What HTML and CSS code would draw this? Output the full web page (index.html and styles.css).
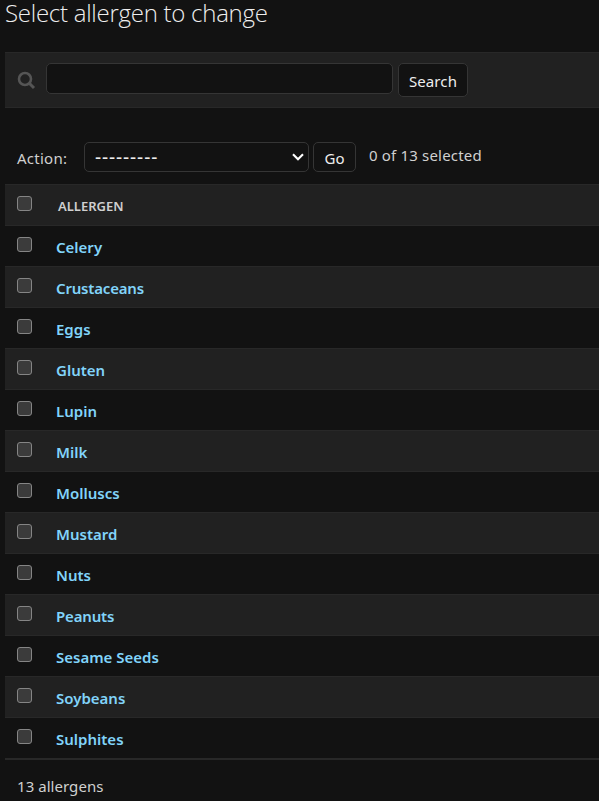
FILE: index.html
```html
<!DOCTYPE html>
<html lang="en">
<head>
<meta charset="utf-8">
<title>Select allergen to change</title>
<link rel="stylesheet" href="styles.css">
</head>
<body>
<main class="content">
  <h1 class="title">Select allergen to change</h1>
  <form class="toolbar">
    <svg class="search-icon" width="19" height="19" viewBox="0 0 19 19" fill="none" stroke="#555" aria-hidden="true"><circle cx="8" cy="8" r="6" stroke-width="2.6"/><path d="M12.3 12.3 17 17" stroke-width="3"/></svg>
    <input class="search-input" type="text" aria-label="Search">
    <button class="button search-button" type="button">Search</button>
  </form>
  <div class="actions">
    <span class="action-label">Action:</span>
    <div class="select"><span class="dashes">---------</span><svg width="12" height="8" viewBox="0 0 12 8" fill="none" stroke="#fff" stroke-width="2.1" aria-hidden="true"><path d="M1 1.2 6 6.2 11 1.2"/></svg></div>
    <button class="button go-button" type="button">Go</button>
    <span class="counter">0 of 13 selected</span>
  </div>
  <div class="results">
    <div class="row head"><span class="check"></span><span class="heading">ALLERGEN</span></div>
    <div class="row"><span class="check"></span><a class="name">Celery</a></div>
    <div class="row"><span class="check"></span><a class="name tight">Crustaceans</a></div>
    <div class="row"><span class="check"></span><a class="name">Eggs</a></div>
    <div class="row"><span class="check"></span><a class="name">Gluten</a></div>
    <div class="row"><span class="check"></span><a class="name">Lupin</a></div>
    <div class="row"><span class="check"></span><a class="name">Milk</a></div>
    <div class="row"><span class="check"></span><a class="name">Molluscs</a></div>
    <div class="row"><span class="check"></span><a class="name">Mustard</a></div>
    <div class="row"><span class="check"></span><a class="name">Nuts</a></div>
    <div class="row"><span class="check"></span><a class="name tight">Peanuts</a></div>
    <div class="row"><span class="check"></span><a class="name">Sesame Seeds</a></div>
    <div class="row"><span class="check"></span><a class="name">Soybeans</a></div>
    <div class="row"><span class="check"></span><a class="name">Sulphites</a></div>
  </div>
  <p class="paginator">13 allergens</p>
</main>
</body>
</html>
```
FILE: styles.css
```css
* { box-sizing: border-box; }
body {
  margin: 0;
  height: 801px;
  overflow: hidden;
  background: #121212;
  color: #d0d0d0;
  font-family: "Noto Sans", "Open Sans", sans-serif;
  font-size: 15px;
  line-height: 20px;
}
.content { padding-left: 5px; }
.title {
  margin: 0;
  height: 52px;
  color: #eee;
  font-family: "Open Sans", "Noto Sans", sans-serif;
  font-size: 24px;
  font-weight: 300;
  line-height: 25px;
  letter-spacing: -0.26px;
}
.toolbar {
  display: flex;
  align-items: flex-start;
  height: 56px;
  margin: 0;
  padding: 10px 0 0 12px;
  background: #212121;
  border-top: 1px solid #282828;
  border-bottom: 1px solid #282828;
}
.search-icon { flex: none; margin: 8px 10px 0 0; }
.search-input {
  width: 347px;
  height: 31px;
  padding: 0 6px;
  background: #121212;
  border: 1px solid #353535;
  border-radius: 5px;
  color: #eee;
}
.button {
  padding: 2px 0 0;
  background: #121212;
  border: 1px solid #353535;
  border-radius: 5px;
  color: #eee;
  font: inherit;
}
.search-button { width: 70px; height: 34px; margin-left: 5px; letter-spacing: 0.1px; }
.actions {
  display: flex;
  align-items: flex-start;
  height: 76px;
  padding: 34px 0 0 12px;
}
.action-label { width: 67px; padding-top: 6px; letter-spacing: 0.25px; }
.select {
  display: flex;
  align-items: center;
  justify-content: space-between;
  width: 225px;
  height: 30px;
  padding: 0 4px 0 10px;
  border: 1px solid #353535;
  border-radius: 5px;
  color: #eee;
}
.dashes { font-size: 19px; letter-spacing: 0.9px; }
.go-button { width: 43px; height: 30px; margin-left: 4px; }
.counter { margin-left: 13px; padding-top: 3px; letter-spacing: 0.18px; }
.results { border-top: 1px solid #282828; border-bottom: 1px solid #282828; }
.row {
  display: flex;
  height: 41px;
  padding: 11px 0 0 12px;
  border-bottom: 1px solid #282828;
}
.row:nth-child(even) { background: #121212; }
.row:nth-child(odd) { background: #212121; }
.check {
  width: 15px;
  height: 15px;
  margin-right: 24px;
  background: #3b3b3b;
  border: 1px solid #858585;
  border-radius: 3px;
}
.name { color: #81d4fa; font-weight: 600; }
.tight { letter-spacing: -0.18px; }
.heading {
  margin-left: 2px;
  font-size: 13px;
  font-weight: 600;
}
.paginator { margin: 0; padding: 16px 0 0 12px; letter-spacing: 0.05px; }
```
